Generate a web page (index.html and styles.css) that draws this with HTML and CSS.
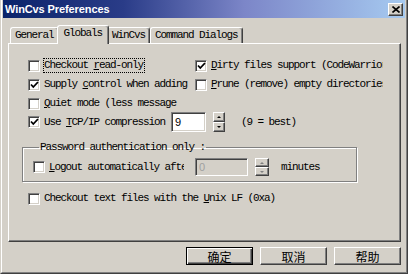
FILE: index.html
```html
<!DOCTYPE html>
<html>
<head>
<meta charset="utf-8">
<link rel="stylesheet" href="styles.css">
</head>
<body>
<div class="window">
  <div class="frame">
    <div class="titlebar">
      <span class="title">WinCvs Preferences</span>
      <div class="closebtn">
        <svg width="8" height="7" viewBox="0 0 8 7"><path d="M0.5 0.5L7.5 6.5M7.5 0.5L0.5 6.5" stroke="#000" stroke-width="1.6" fill="none"/></svg>
      </div>
    </div>

    <div class="tabs">
      <div class="tab">General</div>
      <div class="tab selected">Globals</div>
      <div class="tab">WinCvs</div>
      <div class="tab">Command Dialogs</div>
    </div>

    <div class="panel">
      <div class="grid">
        <div class="check">
          <span class="box"></span>
          <span class="text focus">Checkout <u>r</u>ead-only</span>
        </div>
        <div class="check">
          <span class="box"><svg width="9" height="8" viewBox="0 0 9 8"><path d="M1 3.5L3.3 6L8 1" stroke="#000" stroke-width="1.8" fill="none"/></svg></span>
          <span class="text"><u>D</u>irty files support (CodeWarrior)</span>
        </div>
        <div class="check">
          <span class="box"><svg width="9" height="8" viewBox="0 0 9 8"><path d="M1 3.5L3.3 6L8 1" stroke="#000" stroke-width="1.8" fill="none"/></svg></span>
          <span class="text">Supply <u>c</u>ontrol when adding</span>
        </div>
        <div class="check">
          <span class="box"></span>
          <span class="text"><u>P</u>rune (remove) empty directories</span>
        </div>
        <div class="check">
          <span class="box"></span>
          <span class="text"><u>Q</u>uiet mode (less message</span>
        </div>
        <div></div>
      </div>

      <div class="tcprow">
        <div class="check tcpcheck">
          <span class="box"><svg width="9" height="8" viewBox="0 0 9 8"><path d="M1 3.5L3.3 6L8 1" stroke="#000" stroke-width="1.8" fill="none"/></svg></span>
          <span class="text">Use <u>T</u>CP/IP compression</span>
        </div>
        <div class="edit tcpedit">9</div>
        <div class="spin">
          <div class="arrow up"></div>
          <div class="arrow down"></div>
        </div>
        <span class="hint">(9 = best)</span>
      </div>

      <fieldset class="group">
        <legend>Password authentication only :</legend>
        <div class="logoutrow">
          <div class="check logoutcheck">
            <span class="box"></span>
            <span class="text"><u>L</u>ogout automatically after</span>
          </div>
          <div class="edit disabled logoutedit">0</div>
          <div class="spin disabled small">
            <div class="arrow up"></div>
            <div class="arrow down"></div>
          </div>
          <span class="minutes">minutes</span>
        </div>
      </fieldset>

      <div class="check unixrow">
        <span class="box"></span>
        <span class="text">Checkout text files with the <u>U</u>nix LF (0xa)</span>
      </div>
    </div>

    <div class="buttons">
      <div class="btn default"><span>确定</span></div>
      <div class="btn"><span>取消</span></div>
      <div class="btn"><span>帮助</span></div>
    </div>
  </div>
</div>
</body>
</html>
```

FILE: styles.css
```css
body {
    margin: 0;
    background-color: #d4d0c8;
    font-family: "Liberation Mono", "DejaVu Sans Mono", monospace;
    font-size: 11px;
    letter-spacing: -1.1px;
    color: #000;
}
.window {
    width: 408px;
    height: 274px;
    box-sizing: border-box;
    background-color: #d4d0c8;
    border-left: 1px solid #d4d0c8;
    border-right: 1px solid #404040;
    border-bottom: 1px solid #404040;
}
.frame {
    height: 100%;
    box-sizing: border-box;
    border-left: 1px solid #fff;
    border-right: 1px solid #808080;
    border-bottom: 1px solid #808080;
    padding: 0 1px 1px 1px;
}
.titlebar {
    height: 18px;
    display: flex;
    align-items: center;
    justify-content: space-between;
    padding: 0 2px 0 2px;
    background: linear-gradient(to right, #0a246a 0%, #2a3c88 30%, #7c86c8 60%, #a6caf0 100%);
}
.title {
    color: #fff;
    font: bold 11px "Liberation Sans", Arial, sans-serif;
    letter-spacing: -0.1px;
}
.closebtn {
    width: 15px;
    height: 13px;
    box-sizing: border-box;
    display: flex;
    align-items: center;
    justify-content: center;
    background-color: #d4d0c8;
    border: 1px solid;
    border-color: #fff #404040 #404040 #fff;
    box-shadow: inset -1px -1px #808080;
}

/* tabs */
.tabs {
    display: flex;
    align-items: flex-end;
    height: 19px;
    margin-top: 7px;
    padding-left: 7px;
}
.tab {
    height: 16px;
    margin-bottom: 1px;
    box-sizing: border-box;
    padding: 0 4px;
    border: 1px solid;
    border-bottom: 0;
    border-color: #fff #404040 transparent #fff;
    border-radius: 3px 3px 0 0;
    box-shadow: inset -1px 0 #808080;
    line-height: 15px;
    white-space: nowrap;
}
.tab.selected {
    height: 19px;
    margin: 0 -2px;
    padding: 0 6px;
    position: relative;
    z-index: 1;
    background-color: #d4d0c8;
    line-height: 15px;
}

/* page */
.panel {
    margin: -1px 4px 0 5px;
    height: 199px;
    box-sizing: border-box;
    border: 1px solid;
    border-color: #fff #404040 #404040 #fff;
    box-shadow: inset -1px -1px #808080;
    padding: 12px 0 0 19px;
}
.grid {
    display: grid;
    grid-template-columns: 167px 188px;
    grid-auto-rows: 19px;
}
.check {
    display: flex;
    align-items: center;
    gap: 4px;
    white-space: nowrap;
    overflow: hidden;
}
.text {
    line-height: 13px;
}
.focus {
    outline: 1px dotted #000;
    outline-offset: 0px;
    padding: 0 1px 0 0;
}
.box {
    flex: none;
    width: 12px;
    height: 12px;
    box-sizing: border-box;
    background-color: #fff;
    border: 1px solid;
    border-color: #808080 #fff #fff #808080;
    box-shadow: inset 1px 1px #404040, inset -1px -1px #d4d0c8;
    display: flex;
    align-items: center;
    justify-content: center;
}
.box svg {
    margin: 0 0 0 1px;
}
u {
    text-decoration: underline;
    text-underline-offset: 1px;
}

.tcprow {
    display: flex;
    align-items: center;
    height: 20px;
    margin-top: -1px;
}
.tcpcheck {
    width: 143px;
    flex: none;
}
.edit {
    box-sizing: border-box;
    background-color: #fff;
    border: 1px solid;
    border-color: #808080 #fff #fff #808080;
    box-shadow: inset 1px 1px #404040, inset -1px -1px #d4d0c8;
    padding: 0 0 0 3px;
    font-family: "Liberation Sans", Arial, sans-serif;
    font-size: 11px;
    letter-spacing: 0;
    display: flex;
    align-items: center;
}
.tcpedit {
    width: 35px;
    height: 20px;
}
.edit.disabled {
    background-color: #d4d0c8;
    color: #a0a0a0;
}
.spin {
    display: flex;
    flex-direction: column;
    width: 12px;
    height: 20px;
    margin-left: 7px;
}
.spin.small {
    width: 14px;
    height: 18px;
}
.arrow {
    flex: 1;
    box-sizing: border-box;
    background-color: #d4d0c8;
    border: 1px solid;
    border-color: #fff #404040 #404040 #fff;
    box-shadow: inset -1px -1px #808080;
    display: flex;
    align-items: center;
    justify-content: center;
}
.arrow::after {
    content: "";
    border-left: 2px solid transparent;
    border-right: 2px solid transparent;
}
.arrow.up::after {
    border-bottom: 2px solid #000;
}
.arrow.down::after {
    border-top: 2px solid #000;
}
.spin.disabled .arrow.up::after {
    border-bottom-color: #808080;
}
.spin.disabled .arrow.down::after {
    border-top-color: #808080;
}
.hint {
    margin-left: 16px;
}

.group {
    margin: 9px 0 0 -6px;
    width: 335px;
    box-sizing: border-box;
    border: 1px solid #808080;
    box-shadow: 1px 1px 0 #fff, inset 1px 1px 0 #fff;
    padding: 5px 0 5px 10px;
    min-width: 0;
}
.group legend {
    margin-left: 6px;
    padding: 0 1px;
    line-height: 12px;
}
.logoutrow {
    display: flex;
    align-items: center;
    height: 18px;
}
.logoutcheck {
    width: 151px;
    flex: none;
}
.logoutedit {
    width: 53px;
    height: 18px;
    margin-left: 11px;
}
.minutes {
    margin-left: 12px;
}
.unixrow {
    height: 19px;
    margin-top: 7px;
}

/* dialog buttons */
.buttons {
    display: flex;
    justify-content: flex-end;
    gap: 7px;
    margin-top: 5px;
    padding-right: 4px;
}
.btn {
    width: 67px;
    height: 18px;
    box-sizing: border-box;
    border: 1px solid;
    border-color: #fff #404040 #404040 #fff;
    box-shadow: inset -1px -1px #808080;
    display: flex;
    align-items: center;
    justify-content: center;
    font-family: "Noto Sans CJK SC", sans-serif;
    font-size: 12px;
    letter-spacing: 0;
}
.btn.default {
    border: 1px solid #000;
    box-shadow: inset 1px 1px #fff, inset -1px -1px #404040, inset -2px -2px #808080;
}
```
